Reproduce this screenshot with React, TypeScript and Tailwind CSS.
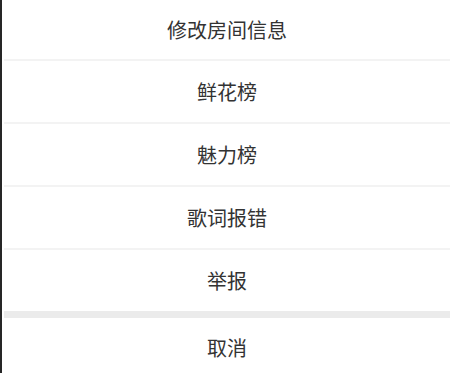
import React from "react";

const items = ["修改房间信息", "鲜花榜", "魅力榜", "歌词报错", "举报"];

export default function App() {
  return (
    <div
      className="w-[450px] h-[373px] overflow-hidden bg-white flex border-l-2 border-[#262626]"
      style={{ fontFamily: '"Noto Sans CJK SC", "Noto Sans", sans-serif' }}
    >
      <div className="flex-1 flex flex-col pl-[2px]">
        {items.map((t, i) => (
          <div key={t} className="flex flex-col">
            <div
              className={`flex items-center justify-center text-[20px] leading-none text-[#333333] ${
                i === 0 ? "h-[59px]" : "h-[61px]"
              }`}
            >
              {t}
            </div>
            {i < items.length - 1 ? (
              <div className="h-[2px] bg-[#f3f3f3]" />
            ) : (
              <div className="h-[7px] bg-[#ebebeb]" />
            )}
          </div>
        ))}
        <div className="h-[64px] flex items-center justify-center text-[20px] leading-none text-[#333333] pt-[5px]">
          取消
        </div>
      </div>
    </div>
  );
}
